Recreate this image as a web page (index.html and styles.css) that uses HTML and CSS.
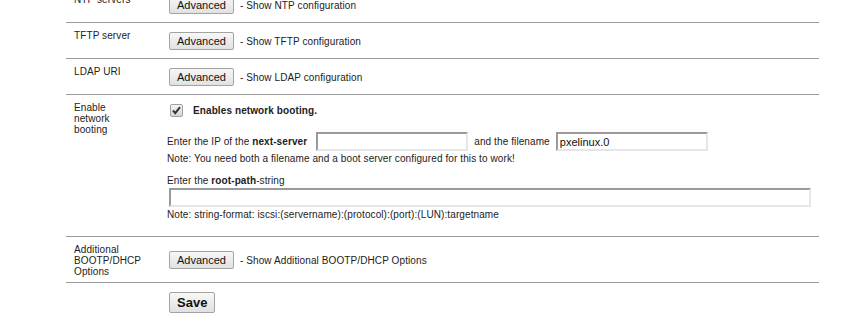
FILE: index.html
```html
<!DOCTYPE html>
<html lang="en">
<head>
    <meta charset="UTF-8">
    <title>Network booting</title>
    <link rel="stylesheet" href="styles.css">
</head>
<body>
    <div class="settings">
        <div class="row">
            <div class="label">NTP servers</div>
            <div class="field"><button class="adv-btn">Advanced</button><span class="desc">- Show NTP configuration</span></div>
        </div>
        <div class="row">
            <div class="label">TFTP server</div>
            <div class="field"><button class="adv-btn">Advanced</button><span class="desc">- Show TFTP configuration</span></div>
        </div>
        <div class="row">
            <div class="label">LDAP URI</div>
            <div class="field"><button class="adv-btn">Advanced</button><span class="desc">- Show LDAP configuration</span></div>
        </div>
        <div class="row">
            <div class="label">Enable network booting</div>
            <div class="field boot">
                <div class="check-line">
                    <span class="check">
                        <svg width="13" height="13" viewBox="0 0 13 13">
                            <path d="M3 6.5 L5.3 9.2 L10 3.2" fill="none" stroke="#333" stroke-width="2"/>
                        </svg>
                    </span>
                    <strong>Enables network booting.</strong>
                </div>
                <div class="ip-line">
                    <span>Enter the IP of the <strong>next-server</strong></span>
                    <input type="text" class="text-in first">
                    <span>and the filename</span>
                    <input type="text" class="text-in" value="pxelinux.0">
                </div>
                <div class="note">Note: You need both a filename and a boot server configured for this to work!</div>
                <div class="root-label">Enter the <strong>root-path</strong>-string</div>
                <input type="text" class="text-in wide">
                <div class="note last">Note: string-format: iscsi:(servername):(protocol):(port):(LUN):targetname</div>
            </div>
        </div>
        <div class="row">
            <div class="label">Additional BOOTP/DHCP Options</div>
            <div class="field"><button class="adv-btn">Advanced</button><span class="desc">- Show Additional BOOTP/DHCP Options</span></div>
        </div>
        <div class="row save-row">
            <div class="label"></div>
            <div class="field"><button class="save-btn">Save</button></div>
        </div>
    </div>
</body>
</html>
```

FILE: styles.css
```css
body {
    margin: 0;
    background: #fff;
    font-family: "Liberation Sans", Arial, sans-serif;
    font-size: 10px;
    line-height: 11px;
    letter-spacing: 0.1px;
    color: #222;
}
.settings {
    margin: -13px 0 0 66px;
    width: 753px;
}
.row {
    display: grid;
    grid-template-columns: 101px 1fr;
    border-bottom: 1px solid #9a9a9a;
}
.save-row {
    border-bottom: none;
}
.label {
    align-self: start;
    padding: 7px 25px 5px 8px;
}
.field {
    align-self: center;
    display: flex;
    align-items: center;
    padding: 9px 0 8px 0;
}
.adv-btn {
    margin: 0 0 0 2px;
    height: 18px;
    padding: 0 7px;
    font-family: "Liberation Sans", Arial, sans-serif;
    font-size: 11px;
    line-height: 16px;
    letter-spacing: 0;
    color: #111;
    background: linear-gradient(#f7f7f7, #e1e1e1);
    border: 1px solid #a3a3a3;
    border-radius: 2px;
}
.desc {
    margin-left: 6px;
}
.save-btn {
    margin: 0 0 0 2px;
    height: 21px;
    padding: 0 7px;
    font-family: "Liberation Sans", Arial, sans-serif;
    font-size: 13px;
    font-weight: bold;
    letter-spacing: 0;
    color: #111;
    background: linear-gradient(#f7f7f7, #e1e1e1);
    border: 1px solid #a3a3a3;
    border-radius: 2px;
}
.field.boot {
    display: block;
}
.check-line {
    display: flex;
    align-items: center;
    height: 13px;
}
.check {
    display: inline-block;
    width: 11px;
    height: 11px;
    margin-left: 3px;
    border: 1px solid #a0a0a0;
    border-radius: 2px;
    background: linear-gradient(#f4f4f4, #d6d6d6);
    position: relative;
}
.check svg {
    position: absolute;
    left: -1px;
    top: -1px;
}
.check-line strong {
    margin-left: 10px;
}
.ip-line {
    display: flex;
    align-items: center;
    gap: 6px;
    margin-top: 15px;
}
.text-in {
    box-sizing: border-box;
    width: 152px;
    height: 19px;
    margin: 0;
    padding: 1px 2px;
    font-family: "Liberation Sans", Arial, sans-serif;
    font-size: 11px;
    letter-spacing: 0;
    color: #111;
    background: #fff;
    border: 2px solid;
    border-color: #9a9a9a #e6e6e6 #e6e6e6 #9a9a9a;
    outline: none;
}
.text-in.first {
    margin-left: 3px;
}
.text-in.wide {
    display: block;
    width: 642px;
    margin: 2px 0 0 2px;
}
.note {
    margin-top: 2px;
}
.note.last {
    margin-bottom: 8px;
}
.root-label {
    margin-top: 11px;
}
```
